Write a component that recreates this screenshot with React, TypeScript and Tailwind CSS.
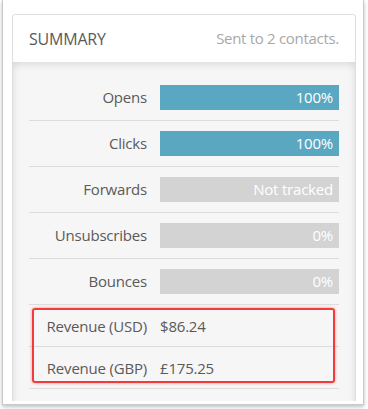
const rows = [
  { label: 'Opens', value: '100%', tracked: true },
  { label: 'Clicks', value: '100%', tracked: true },
  { label: 'Forwards', value: 'Not tracked', tracked: false },
  { label: 'Unsubscribes', value: '0%', tracked: false },
  { label: 'Bounces', value: '0%', tracked: false },
];

const revenue = [
  { label: 'Revenue (USD)', value: '$86.24' },
  { label: 'Revenue (GBP)', value: '£175.25' },
];

export default function App() {
  return (
    <div className="w-[368px] h-[409px] bg-white overflow-hidden font-['Open_Sans',sans-serif]">
      <div className="ml-[2px] w-[362px] h-[405px] border-x border-b border-[#c9c9c9] bg-white pl-[9px] pr-[6px] pt-[14px] shadow-[0_2px_4px_rgba(0,0,0,0.25)]">
        <div className="w-[344px] h-[387px] border border-b-0 border-[#dedede] rounded-t-[4px] flex flex-col overflow-hidden">
          <div className="h-[47px] shrink-0 bg-white flex items-center justify-between px-[16px]">
            <span className="text-[16px] text-[#5a5a5a] tracking-[-0.2px]">SUMMARY</span>
            <span className="text-[15px] text-[#a8a8a8] tracking-[-0.3px]">Sent to 2 contacts.</span>
          </div>
          <div className="flex-1 bg-[#f6f6f6] px-[16px] pt-[13px] shadow-[inset_0_6px_8px_-4px_rgba(0,0,0,0.12),inset_8px_0_10px_-8px_rgba(0,0,0,0.08),inset_-8px_0_10px_-8px_rgba(0,0,0,0.08)]">
            {rows.map((r) => (
              <div key={r.label} className="flex items-center gap-[13px] h-[46px] pb-[1px] border-b border-[#dcdcdc]">
                <div className="w-[118px] text-right text-[15px] leading-[20px] text-[#5a5a5a] tracking-[-0.2px]">{r.label}</div>
                <div
                  className={`w-[179px] h-[25px] flex items-center justify-end pr-[6px] text-[15px] text-white tracking-[-0.2px] ${
                    r.tracked ? 'bg-[#5aa7c2]' : 'bg-[#d3d3d3]'
                  }`}
                >
                  {r.value}
                </div>
              </div>
            ))}
            <div className="relative">
              {revenue.map((r) => (
                <div key={r.label} className="flex items-center gap-[13px] h-[42px] pt-[1px] border-b border-[#dcdcdc]">
                  <div className="w-[118px] text-right text-[15px] text-[#5a5a5a] tracking-[-0.2px]">{r.label}</div>
                  <div className="text-[15px] text-[#5a5a5a] tracking-[-0.2px]">{r.value}</div>
                </div>
              ))}
              <div className="absolute left-[3px] right-[4px] top-[3px] bottom-[6px] border-2 border-[#f23b3b] rounded-[3px] shadow-[0_0_3px_rgba(240,60,60,0.6)]" />
            </div>
          </div>
        </div>
      </div>
    </div>
  );
}
